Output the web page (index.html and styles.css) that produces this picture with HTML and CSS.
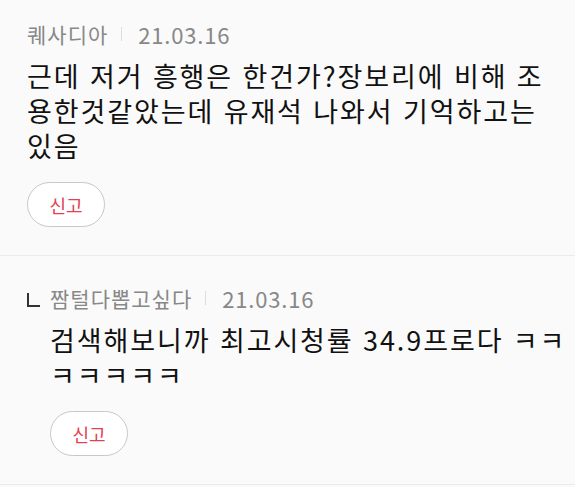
FILE: index.html
```html
<!DOCTYPE html>
<html lang="ko">
<head>
    <meta charset="UTF-8">
    <title>댓글</title>
    <meta name="viewport" content="width=device-width, initial-scale=1.0">
    <link rel="stylesheet" href="styles.css">
</head>
<body>
    <ul class="comments">
        <li class="comment">
            <div class="comment-body">
                <div class="meta">
                    <span class="nick">퀘사디아</span>
                    <span class="sep"></span>
                    <span class="date">21.03.16</span>
                </div>
                <p class="text">근데 저거 흥행은 한건가?장보리에 비해 조용한것같았는데 유재석 나와서 기억하고는 있음</p>
                <button class="report">신고</button>
            </div>
        </li>
        <li class="comment reply">
            <span class="reply-mark"></span>
            <div class="comment-body">
                <div class="meta">
                    <span class="nick">짬털다뽑고싶다</span>
                    <span class="sep"></span>
                    <span class="date">21.03.16</span>
                </div>
                <p class="text">검색해보니까 최고시청률 34.9프로다 ㅋㅋㅋㅋㅋㅋㅋ</p>
                <button class="report">신고</button>
            </div>
        </li>
    </ul>
</body>
</html>
```

FILE: styles.css
```css
body {
    margin: 0;
    background-color: #fafafa;
    font-family: "Noto Sans CJK KR", "Noto Sans", sans-serif;
    color: #111;
}
.comments {
    list-style: none;
    margin: 0;
    padding: 0;
}
.comment {
    display: flex;
    padding: 28px 20px 28px 27px;
    border-bottom: 1px solid #ebebeb;
}
.comment:first-child {
    padding-top: 20px;
}
.reply {
    padding-right: 5px;
}
.comment-body {
    flex: 1;
    min-width: 0;
}
.reply-mark {
    flex: none;
    width: 11px;
    height: 12px;
    margin: 9px 10px 0 0;
    border-left: 2px solid #333;
    border-bottom: 2px solid #333;
}
.meta {
    display: flex;
    align-items: center;
    height: 28px;
    color: #888;
}
.nick {
    font-size: 21px;
    letter-spacing: 1px;
}
.sep {
    width: 1px;
    height: 14px;
    margin: 0 16px 0 13px;
    background-color: #ddd;
}
.date {
    font-size: 22px;
    letter-spacing: 0.8px;
}
.text {
    margin: 10px 0 0;
    font-size: 27px;
    line-height: 35px;
    letter-spacing: 1.9px;
}
.report {
    display: block;
    width: 78px;
    height: 45px;
    margin-top: 19px;
    padding: 0;
    background-color: #fff;
    border: 1px solid #c8c8c8;
    border-radius: 23px;
    color: #e5404f;
    font-family: inherit;
    font-size: 18px;
    cursor: pointer;
}
```
